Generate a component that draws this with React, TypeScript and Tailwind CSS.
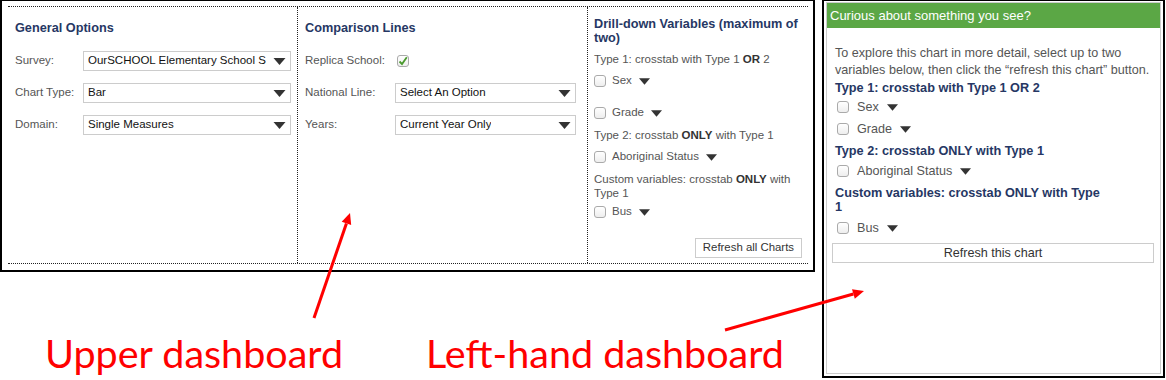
import React from 'react';

// small dark triangle used by the selects and the drill-down variables
function Caret({ w = 12, h = 7 }: { w?: number; h?: number }) {
  return (
    <svg width={w} height={h} viewBox="0 0 12 7" className="shrink-0">
      <polygon points="0,0 12,0 6,7" fill="#333" />
    </svg>
  );
}

function Box({ checked = false }: { checked?: boolean }) {
  return (
    <span className="flex h-[12px] w-[12px] shrink-0 items-center justify-center rounded-[3px] border border-[#aaa] bg-gradient-to-b from-white to-[#eee]">
      {checked && (
        <svg width="10" height="10" viewBox="0 0 10 10">
          <path d="M1.5 5.5 L4 8 L8.8 1.2" fill="none" stroke="#4a9a2e" strokeWidth="1.8" />
        </svg>
      )}
    </span>
  );
}

function Select({ value, width, textWidth = '' }: { value: string; width: string; textWidth?: string }) {
  return (
    <div className={`flex h-[20px] items-center justify-between border border-[#ccc] bg-white pl-[4px] pr-[4px] text-[11.5px] text-[#111] ${width}`}>
      <span className={`shrink-0 overflow-hidden whitespace-nowrap ${textWidth}`}>{value}</span>
      <span className="ml-[5px]">
        <Caret w={13} h={7} />
      </span>
    </div>
  );
}

function Row({ label, labelWidth, children }: { label: string; labelWidth: string; children: React.ReactNode }) {
  return (
    <div className="flex h-[20px] items-center">
      <span className={`text-[11.5px] text-[#555] ${labelWidth}`}>{label}</span>
      {children}
    </div>
  );
}

function Variable({ name, className = '' }: { name: string; className?: string }) {
  return (
    <div className={`flex h-[16px] items-center text-[11.5px] text-[#555] ${className}`}>
      <Box />
      <span className="ml-[6px]">{name}</span>
      <span className="ml-[7px]">
        <Caret w={11} h={7} />
      </span>
    </div>
  );
}

function SideVariable({ name, className = '' }: { name: string; className?: string }) {
  return (
    <div className={`flex h-[18px] items-center pl-[2px] text-[12.6px] text-[#555] ${className}`}>
      <Box />
      <span className="ml-[8px]">{name}</span>
      <span className="ml-[8px]">
        <Caret w={11} h={7} />
      </span>
    </div>
  );
}

export default function App() {
  const title = 'font-bold text-[12.7px] text-[#263764]';

  return (
    <div className="relative flex h-[380px] w-[1166px] overflow-hidden bg-white font-['Liberation_Sans',Arial,sans-serif]">
      {/* upper dashboard + captions */}
      <div className="flex w-[815px] flex-col">
        <div className="h-[272px] border-x-2 border-b-2 border-t border-black pl-[6px] pr-[5px] pt-[5px]">
          <div className="flex h-[258px] border-y border-dotted border-[#222]">
            {/* General Options */}
            <div className="w-[290px] border-r border-dotted border-[#222] pl-[7px]">
              <div className={`${title} mt-[14px] leading-[15px]`}>General Options</div>
              <div className="mt-[15px] flex flex-col gap-[12px]">
                <Row label="Survey:" labelWidth="w-[68px]">
                  <Select value="OurSCHOOL Elementary School Survey" width="w-[208px]" textWidth="w-[178px]" />
                </Row>
                <Row label="Chart Type:" labelWidth="w-[68px]">
                  <Select value="Bar" width="w-[208px]" />
                </Row>
                <Row label="Domain:" labelWidth="w-[68px]">
                  <Select value="Single Measures" width="w-[208px]" />
                </Row>
              </div>
            </div>

            {/* Comparison Lines */}
            <div className="w-[290px] border-r border-dotted border-[#222] pl-[7px]">
              <div className={`${title} mt-[14px] leading-[15px]`}>Comparison Lines</div>
              <div className="mt-[15px] flex flex-col gap-[12px]">
                <Row label="Replica School:" labelWidth="w-[92px]">
                  <Box checked />
                </Row>
                <Row label="National Line:" labelWidth="w-[90px]">
                  <Select value="Select An Option" width="w-[181px]" />
                </Row>
                <Row label="Years:" labelWidth="w-[90px]">
                  <Select value="Current Year Only" width="w-[181px]" />
                </Row>
              </div>
            </div>

            {/* Drill-down */}
            <div className="flex flex-1 flex-col pl-[6px] pr-[6px]">
              <div className={`${title} mt-[10px] leading-[14px]`}>Drill-down Variables (maximum of two)</div>
              <div className="mt-[6px] text-[11.5px] leading-[16px] text-[#555]">
                Type 1: crosstab with Type 1 <b className="text-[#333]">OR</b> 2
              </div>
              <Variable name="Sex" className="mt-[6px]" />
              <Variable name="Grade" className="mt-[16px]" />
              <div className="mt-[6px] text-[11.5px] leading-[16px] text-[#555]">
                Type 2: crosstab <b className="text-[#333]">ONLY</b> with Type 1
              </div>
              <Variable name="Aboriginal Status" className="mt-[6px]" />
              <div className="mt-[7px] text-[11.5px] leading-[14px] text-[#555]">
                Custom variables: crosstab <b className="text-[#333]">ONLY</b> with Type 1
              </div>
              <Variable name="Bus" className="mt-[4px]" />
              <div className="mt-[18px] flex justify-end">
                <button className="h-[20px] border border-[#ccc] bg-white px-[7px] text-[11.4px] text-[#333]">
                  Refresh all Charts
                </button>
              </div>
            </div>
          </div>
        </div>

        <div className="flex items-baseline pl-[45px] pt-[61px] font-['Lato',sans-serif] text-[39.5px] leading-[40px] text-[#ff0000]">
          <span>Upper dashboard</span>
          <span className="ml-[83px]">Left-hand dashboard</span>
        </div>
      </div>

      {/* left-hand dashboard */}
      <div className="ml-[7px] h-[378px] w-[343px] border-x-2 border-b-2 border-t border-black px-[2px] pb-[2px] pt-[1px]">
        <div className="flex h-full flex-col border border-[#ccc]">
          <div className="h-[25px] bg-[#5ba745] pl-[3px] text-[13px] leading-[25px] text-white">
            Curious about something you see?
          </div>
          <div className="flex flex-col pl-[8px] pr-[4px]">
            <p className="mt-[17px] text-[12.6px] leading-[17px] text-[#555]">
              To explore this chart in more detail, select up to two variables below, then click the “refresh this chart” button.
            </p>
            <div className="mt-[1px] text-[12.7px] font-bold leading-[17px] text-[#263764]">Type 1: crosstab with Type 1 OR 2</div>
            <SideVariable name="Sex" className="mt-[1px]" />
            <SideVariable name="Grade" className="mt-[4px]" />
            <div className="mt-[5px] text-[12.7px] font-bold leading-[17px] text-[#263764]">Type 2: crosstab ONLY with Type 1</div>
            <SideVariable name="Aboriginal Status" className="mt-[2px]" />
            <div className="mt-[6px] w-[275px] text-[12.7px] font-bold leading-[14px] text-[#263764]">
              Custom variables: crosstab ONLY with Type 1
            </div>
            <SideVariable name="Bus" className="mt-[5px]" />
            <button className="-ml-[3px] mr-[2px] mt-[6px] h-[20px] border border-[#ccc] bg-white text-[12.6px] text-[#333]">
              Refresh this chart
            </button>
          </div>
        </div>
      </div>

      {/* annotation arrows */}
      <svg className="pointer-events-none absolute inset-0" width="1166" height="380" viewBox="0 0 1166 380">
        <line x1="314" y1="318" x2="346.4" y2="223.4" stroke="#ff0000" strokeWidth="3" />
        <polygon points="350,213 351.2,225 341.7,221.8" fill="#ff0000" />
        <line x1="725" y1="330" x2="853.4" y2="294" stroke="#ff0000" strokeWidth="3" />
        <polygon points="864,291 854.8,298.8 852,289.2" fill="#ff0000" />
      </svg>
    </div>
  );
}
